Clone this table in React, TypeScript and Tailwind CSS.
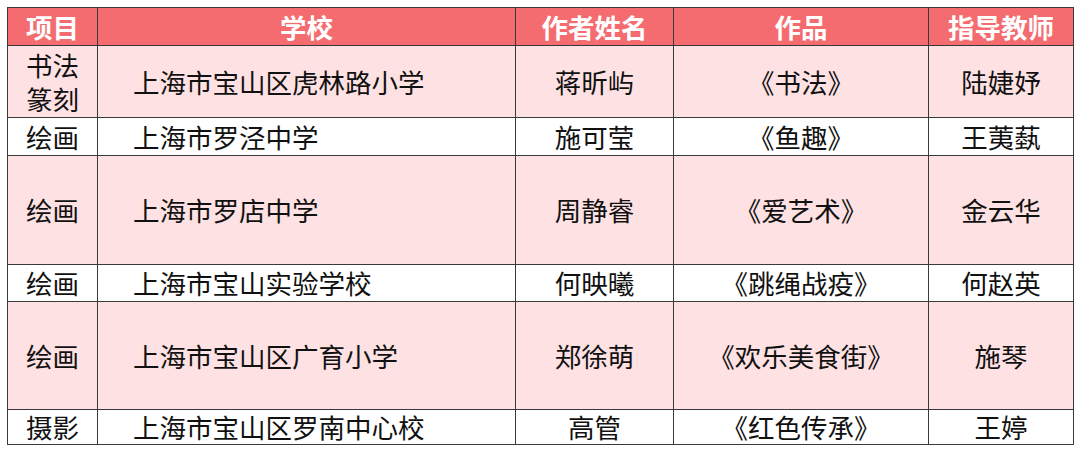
const rows = [
  { kind: ['书法', '篆刻'], school: '上海市宝山区虎林路小学', name: '蒋昕屿', work: '《书法》', teacher: '陆婕妤', h: 'h-[72px]', pink: true },
  { kind: ['绘画'], school: '上海市罗泾中学', name: '施可莹', work: '《鱼趣》', teacher: '王荑蓺', h: 'h-[38px]', pink: false },
  { kind: ['绘画'], school: '上海市罗店中学', name: '周静睿', work: '《爱艺术》', teacher: '金云华', h: 'h-[109px]', pink: true },
  { kind: ['绘画'], school: '上海市宝山实验学校', name: '何映曦', work: '《跳绳战疫》', teacher: '何赵英', h: 'h-[37px]', pink: false },
  { kind: ['绘画'], school: '上海市宝山区广育小学', name: '郑徐萌', work: '《欢乐美食街》', teacher: '施琴', h: 'h-[108px]', pink: true },
  { kind: ['摄影'], school: '上海市宝山区罗南中心校', name: '高管', work: '《红色传承》', teacher: '王婷', h: 'h-[35px]', pink: false },
]

const cell = 'border border-[#3a3a3a] p-0 align-middle'

export default function App() {
  return (
    <div className="w-[1080px] h-[453px] bg-white pt-[7px] pl-[7px] font-['Noto_Sans_CJK_SC','Noto_Sans',sans-serif] text-[26.5px] leading-[34px] text-[#111]">
      <table className="table-fixed border-collapse w-[1066px]">
        <colgroup>
          <col className="w-[90px]" />
          <col className="w-[418px]" />
          <col className="w-[158px]" />
          <col className="w-[255px]" />
          <col className="w-[145px]" />
        </colgroup>
        <thead>
          <tr className="h-[38px] bg-[#f46c6f] text-white font-bold">
            <th className={cell}>项目</th>
            <th className={cell}>学校</th>
            <th className={cell}>作者姓名</th>
            <th className={cell}>作品</th>
            <th className={cell}>指导教师</th>
          </tr>
        </thead>
        <tbody>
          {rows.map((r, i) => (
            <tr key={i} className={`${r.h} ${r.pink ? 'bg-[#fee1e3]' : 'bg-white'}`}>
              <td className={`${cell} text-center`}>
                {r.kind.length > 1 ? (
                  <span className="inline-block w-[56px] break-all">{r.kind.join('')}</span>
                ) : (
                  r.kind[0]
                )}
              </td>
              <td className={`${cell} pl-[35px]`}>{r.school}</td>
              <td className={`${cell} text-center`}>{r.name}</td>
              <td className={`${cell} text-center`}>{r.work}</td>
              <td className={`${cell} text-center`}>{r.teacher}</td>
            </tr>
          ))}
        </tbody>
      </table>
    </div>
  )
}
